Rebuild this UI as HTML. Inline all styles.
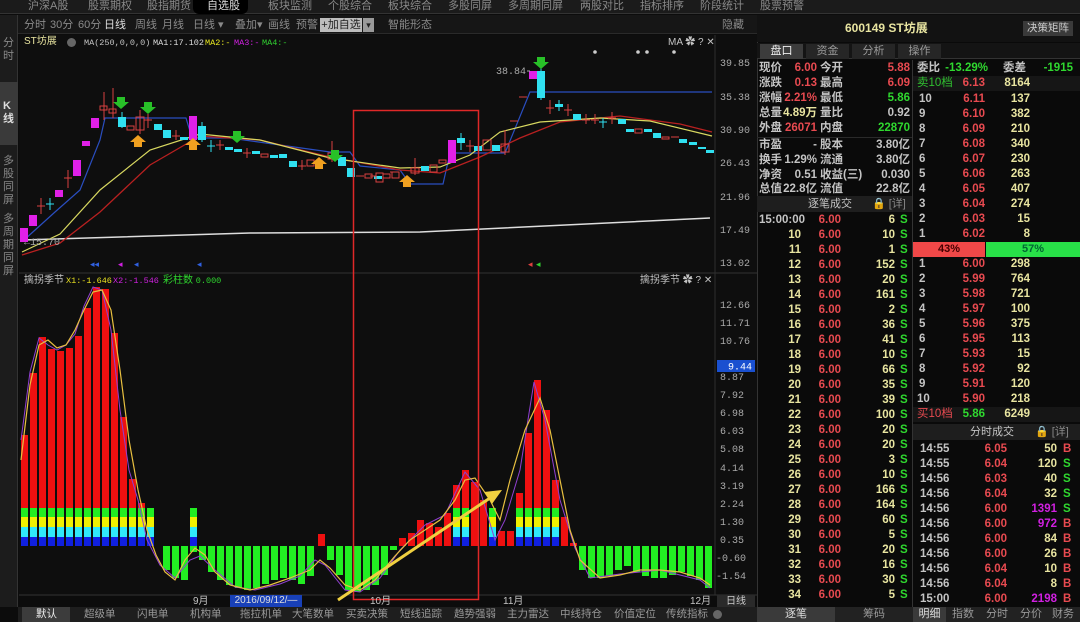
<!DOCTYPE html>
<html><head><meta charset="utf-8">
<style>
*{margin:0;padding:0;box-sizing:border-box}
body{width:1080px;height:622px;background:#0c0c0c;overflow:hidden;position:relative;font-family:"Liberation Sans","Noto Sans CJK SC",sans-serif;font-size:11px;color:#bbb}
.a{position:absolute;white-space:nowrap;line-height:1}
.r{text-align:right}
.rd{color:#e84a50}.gn{color:#2fd82f}.yl{color:#e8e4a0}.gy{color:#c4c4c4}.pu{color:#d020e0}
.row{position:absolute;height:15px;line-height:15px;font-weight:bold;font-size:11.5px;white-space:nowrap}
.m{font-family:"Liberation Mono",monospace;font-size:8.5px}
</style></head><body>
<!-- top nav -->
<div class="a" style="left:0;top:0;width:1080px;height:14px;background:#1b1b1b;border-bottom:1px solid #333"></div>
<div class="a" style="left:193px;top:0;width:55px;height:14px;background:#000;border-radius:0 0 6px 6px"></div>
<div class="a" style="top:1px;left:0;font-size:11px;color:#8a8a8a">
<span class="a" style="left:28px">沪深A股</span><span class="a" style="left:88px">股票期权</span><span class="a" style="left:147px">股指期货</span><span class="a" style="left:207px;color:#ddd">自选股</span><span class="a" style="left:268px">板块监测</span><span class="a" style="left:328px">个股综合</span><span class="a" style="left:388px">板块综合</span><span class="a" style="left:448px">多股同屏</span><span class="a" style="left:508px">多周期同屏</span><span class="a" style="left:580px">两股对比</span><span class="a" style="left:640px">指标排序</span><span class="a" style="left:700px">阶段统计</span><span class="a" style="left:760px">股票预警</span></div>
<!-- toolbar -->
<div class="a" style="left:18px;top:15px;width:739px;height:19px;background:#161616;border-bottom:1px solid #2a2a2a"></div>
<div class="a" style="top:20px;left:0;color:#8a8a8a;font-size:11px">
<span class="a" style="left:24px">分时</span><span class="a" style="left:50px">30分</span><span class="a" style="left:78px">60分</span><span class="a" style="left:104px;color:#ddd">日线</span><span class="a" style="left:135px">周线</span><span class="a" style="left:162px">月线</span><span class="a" style="left:193px">日线 ▾</span><span class="a" style="left:235px">叠加▾</span><span class="a" style="left:268px">画线</span><span class="a" style="left:296px">预警</span><span class="a" style="left:388px">智能形态</span><span class="a" style="left:722px">隐藏</span></div>
<div class="a" style="left:320px;top:18px;width:42px;height:14px;background:#bdbdbd;color:#222;font-size:11px;line-height:14px;text-align:center">+加自选</div>
<div class="a" style="left:363px;top:18px;width:11px;height:14px;background:#9a9a9a;color:#222;font-size:9px;line-height:14px;text-align:center">▾</div>
<!-- sidebar -->
<div class="a" style="left:0;top:15px;width:18px;height:592px;background:#1c1c1c;border-right:1px solid #333"></div>
<div class="a" style="left:0;top:82px;width:18px;height:63px;background:#3a3a3a"></div>
<div class="a" style="left:3px;top:37px;width:12px;font-size:11px;color:#888;line-height:13px;white-space:normal">分时</div>
<div class="a" style="left:3px;top:100px;width:12px;font-size:11px;color:#ddd;line-height:13px;white-space:normal;font-weight:bold">K线</div>
<div class="a" style="left:3px;top:155px;width:12px;font-size:11px;color:#888;line-height:13px;white-space:normal">多股同屏</div>
<div class="a" style="left:3px;top:213px;width:12px;font-size:11px;color:#888;line-height:13px;white-space:normal">多周期同屏</div>
<!-- chart svg -->
<svg class="a" style="left:0;top:0" width="757" height="622" xmlns="http://www.w3.org/2000/svg">
<rect x="19" y="35" width="738" height="560" fill="#0e0e0e"/>
<line x1="19" y1="273" x2="757" y2="273" stroke="#333"/>
<line x1="715" y1="35" x2="715" y2="595" stroke="#2e2e2e"/>
<line x1="19" y1="595" x2="757" y2="595" stroke="#333"/>
<polyline fill="none" stroke="#ddd" stroke-width="1.5" points="22,240 250,233 420,232 710,218"/>
<polyline fill="none" stroke="#2a4ec0" stroke-width="1.2" points="24,240 55,212 80,190 100,140 105,118 186,118 192,138 230,138 330,152 350,152 360,166 400,170 410,184 443,184 450,153 505,153 530,92 540,92 712,92"/>
<polyline fill="none" stroke="#b82020" stroke-width="1.3" points="22,255 60,243 100,212 150,165 200,136 260,140 330,157 400,170 440,173 480,157 520,138 560,122 620,116 680,124 712,132"/>
<polyline fill="none" stroke="#d8d860" stroke-width="1.2" points="22,252 60,234 100,190 150,150 200,134 260,140 330,158 400,168 440,167 470,155 500,132 540,122 600,118 650,121 712,136"/>
<g fill="#e020e8">
<rect x="20" y="228" width="8" height="14"/><rect x="29" y="215" width="8" height="11"/><rect x="55" y="190" width="8" height="7"/><rect x="73" y="160" width="8" height="16"/><rect x="82" y="141" width="8" height="5"/><rect x="91" y="118" width="8" height="10"/><rect x="189" y="116" width="8" height="24"/><rect x="448" y="140" width="8" height="23"/><rect x="529" y="71" width="8" height="8"/></g>
<g fill="#30e0f0">
<rect x="118" y="117" width="8" height="10"/><rect x="154" y="124" width="8" height="6"/><rect x="163" y="130" width="8" height="8"/><rect x="180" y="137" width="8" height="3"/><rect x="198" y="126" width="8" height="14"/><rect x="225" y="147" width="8" height="3"/><rect x="234" y="149" width="8" height="3"/><rect x="252" y="151" width="8" height="3"/><rect x="270" y="155" width="8" height="3"/><rect x="279" y="154" width="8" height="4"/><rect x="289" y="161" width="8" height="6"/><rect x="338" y="157" width="8" height="9"/><rect x="347" y="168" width="8" height="9"/><rect x="374" y="176" width="8" height="3"/><rect x="421" y="166" width="8" height="5"/><rect x="457" y="138" width="8" height="5"/><rect x="474" y="146" width="8" height="5"/><rect x="492" y="145" width="8" height="6"/><rect x="537" y="71" width="8" height="27"/><rect x="555" y="104" width="8" height="3"/><rect x="573" y="114" width="8" height="6"/><rect x="618" y="119" width="8" height="5"/><rect x="626" y="129" width="8" height="3"/><rect x="644" y="129" width="8" height="3"/><rect x="653" y="133" width="8" height="5"/><rect x="679" y="139" width="8" height="4"/><rect x="689" y="142" width="8" height="3"/><rect x="698" y="147" width="8" height="2"/><rect x="706" y="150" width="8" height="3"/></g>
<g stroke="#30e0f0" stroke-width="1"><line x1="50" y1="198" x2="50" y2="210"/><line x1="122" y1="112" x2="122" y2="128"/><line x1="202" y1="122" x2="202" y2="142"/><line x1="211" y1="140" x2="211" y2="152"/><line x1="207" y1="146" x2="215" y2="146"/><line x1="541" y1="66" x2="541" y2="100"/><line x1="461" y1="133" x2="461" y2="150"/><line x1="559" y1="100" x2="559" y2="111"/><line x1="603" y1="118" x2="603" y2="128"/><line x1="599" y1="122" x2="607" y2="122"/><line x1="46" y1="204" x2="54" y2="204"/></g>
<g stroke="#d84040" stroke-width="1" fill="none">
<line x1="41" y1="198" x2="41" y2="214"/><line x1="37" y1="206" x2="45" y2="206"/>
<line x1="68" y1="170" x2="68" y2="188"/><line x1="64" y1="178" x2="72" y2="178"/>
<rect x="100" y="106" width="7" height="4"/><line x1="104" y1="92" x2="104" y2="120"/>
<rect x="109" y="109" width="7" height="4"/><line x1="113" y1="88" x2="113" y2="118"/>
<rect x="127" y="126" width="7" height="4"/><rect x="136" y="117" width="8" height="13"/><line x1="140" y1="110" x2="140" y2="134"/>
<line x1="148" y1="114" x2="148" y2="128"/><line x1="144" y1="120" x2="152" y2="120"/>
<line x1="176" y1="130" x2="176" y2="140"/><line x1="172" y1="136" x2="180" y2="136"/>
<line x1="220" y1="140" x2="220" y2="150"/><line x1="216" y1="145" x2="224" y2="145"/>
<line x1="247" y1="148" x2="247" y2="158"/><line x1="243" y1="153" x2="251" y2="153"/>
<rect x="261" y="154" width="7" height="3"/><line x1="302" y1="160" x2="302" y2="170"/><line x1="298" y1="166" x2="306" y2="166"/>
<rect x="307" y="160" width="7" height="6"/><line x1="316" y1="162" x2="324" y2="162"/>
<rect x="328" y="153" width="8" height="6"/><line x1="332" y1="141" x2="332" y2="162"/>
<line x1="356" y1="176" x2="364" y2="176"/><rect x="365" y="174" width="7" height="4"/><rect x="383" y="174" width="7" height="4"/><rect x="392" y="172" width="7" height="6"/>
<line x1="370" y1="176" x2="376" y2="176"/><rect x="376" y="173" width="7" height="9"/><line x1="390" y1="172" x2="398" y2="172"/>
<rect x="411" y="168" width="8" height="5"/><line x1="415" y1="158" x2="415" y2="175"/>
<rect x="430" y="165" width="7" height="7"/><rect x="439" y="160" width="7" height="3"/>
<line x1="470" y1="140" x2="470" y2="152"/><line x1="466" y1="146" x2="474" y2="146"/>
<rect x="483" y="140" width="8" height="10"/><rect x="501" y="144" width="8" height="8"/><line x1="505" y1="130" x2="505" y2="155"/>
<line x1="510" y1="121" x2="518" y2="121"/><line x1="519" y1="97" x2="527" y2="97"/>
<line x1="550" y1="100" x2="550" y2="114"/><line x1="546" y1="108" x2="554" y2="108"/>
<line x1="568" y1="104" x2="568" y2="116"/><line x1="564" y1="110" x2="572" y2="110"/>
<line x1="586" y1="114" x2="586" y2="124"/><line x1="582" y1="120" x2="590" y2="120"/>
<line x1="595" y1="114" x2="595" y2="124"/><line x1="591" y1="120" x2="599" y2="120"/>
<line x1="612" y1="112" x2="612" y2="124"/><line x1="608" y1="118" x2="616" y2="118"/>
<rect x="635" y="129" width="7" height="4"/><rect x="662" y="137" width="7" height="2"/><line x1="671" y1="137" x2="679" y2="137"/></g>
<g fill="#28c028"><path d="M117 97h8v5h4l-8 7-8-7h4z"/><path d="M144 102h8v5h4l-8 7-8-7h4z"/><path d="M233 131h8v5h4l-8 7-8-7h4z"/><path d="M331 150h8v5h4l-8 7-8-7h4z"/><path d="M537 57h8v5h4l-8 7-8-7h4z"/></g>
<g fill="#f0a020"><path d="M138 135l-8 7h4v5h8v-5h4z"/><path d="M193 138l-8 7h4v5h8v-5h4z"/><path d="M319 157l-8 7h4v5h8v-5h4z"/><path d="M407 175l-8 7h4v5h8v-5h4z"/></g>
<g fill="#ccc"><circle cx="595" cy="52" r="1.8"/><circle cx="638" cy="52" r="1.8"/><circle cx="647" cy="52" r="1.8"/><circle cx="674" cy="52" r="1.8"/></g>
<text x="496" y="74" fill="#aaa" font-size="10" font-family="Liberation Mono">38.84</text><line x1="527" y1="71" x2="530" y2="71" stroke="#aaa"/>
<text x="24" y="245" fill="#aaa" font-size="10" font-family="Liberation Mono">←15.70</text>
<g font-size="9" fill="#3060e0"><text x="90" y="267">◂◂</text><text x="134" y="267">◂</text><text x="197" y="267">◂</text></g>
<text x="118" y="267" font-size="9" fill="#d020e0">◂</text><text x="528" y="267" font-size="9" fill="#e04040">◂</text><text x="536" y="267" font-size="9" fill="#30d030">◂</text>
<g fill="#ee1010">
<rect x="21" y="435" width="7" height="111"/><rect x="30" y="373" width="7" height="173"/><rect x="39" y="337" width="7" height="209"/><rect x="48" y="349" width="7" height="197"/><rect x="57" y="351" width="7" height="195"/><rect x="66" y="348" width="7" height="198"/><rect x="75" y="336" width="7" height="210"/><rect x="84" y="308" width="7" height="238"/><rect x="93" y="287" width="7" height="259"/><rect x="102" y="289" width="7" height="257"/><rect x="111" y="333" width="7" height="213"/><rect x="120" y="417" width="7" height="129"/><rect x="129" y="479" width="7" height="67"/><rect x="138" y="503" width="7" height="43"/>
<rect x="318" y="534" width="7" height="12"/>
<rect x="399" y="538" width="7" height="8"/><rect x="408" y="533" width="7" height="13"/><rect x="417" y="520" width="7" height="26"/><rect x="426" y="523" width="7" height="23"/><rect x="435" y="527" width="7" height="19"/><rect x="444" y="513" width="7" height="33"/><rect x="453" y="485" width="7" height="61"/><rect x="462" y="470" width="7" height="76"/><rect x="471" y="482" width="7" height="64"/><rect x="480" y="500" width="7" height="46"/><rect x="498" y="531" width="7" height="15"/><rect x="507" y="531" width="7" height="15"/><rect x="516" y="493" width="7" height="53"/><rect x="525" y="433" width="7" height="113"/><rect x="534" y="380" width="7" height="166"/><rect x="543" y="410" width="7" height="136"/><rect x="552" y="480" width="7" height="66"/><rect x="561" y="517" width="7" height="29"/><rect x="570" y="543" width="7" height="3"/></g>
<defs><g id="st"><rect width="7" height="9" fill="#22ee22"/><rect y="9" width="7" height="10" fill="#f0f000"/><rect y="19" width="7" height="10" fill="#30e8f8"/><rect y="29" width="7" height="9" fill="#1020e0"/></g></defs>
<g transform="translate(0,508)"><use href="#st" x="21"/><use href="#st" x="30"/><use href="#st" x="39"/><use href="#st" x="48"/><use href="#st" x="57"/><use href="#st" x="66"/><use href="#st" x="75"/><use href="#st" x="84"/><use href="#st" x="93"/><use href="#st" x="102"/><use href="#st" x="111"/><use href="#st" x="120"/><use href="#st" x="129"/><use href="#st" x="138"/><use href="#st" x="147"/><use href="#st" x="190"/><use href="#st" x="453"/><use href="#st" x="462"/><use href="#st" x="489"/><use href="#st" x="516"/><use href="#st" x="525"/><use href="#st" x="534"/><use href="#st" x="543"/><use href="#st" x="552"/></g>
<g fill="#22ee22">
<rect x="163" y="546" width="7" height="24"/><rect x="172" y="546" width="7" height="32"/><rect x="181" y="546" width="7" height="34"/><rect x="190" y="546" width="7" height="6"/><rect x="199" y="546" width="7" height="14"/><rect x="208" y="546" width="7" height="26"/><rect x="217" y="546" width="7" height="34"/><rect x="226" y="546" width="7" height="39"/><rect x="235" y="546" width="7" height="42"/><rect x="244" y="546" width="7" height="44"/><rect x="253" y="546" width="7" height="42"/><rect x="262" y="546" width="7" height="38"/><rect x="271" y="546" width="7" height="34"/><rect x="280" y="546" width="7" height="32"/><rect x="289" y="546" width="7" height="34"/><rect x="298" y="546" width="7" height="38"/><rect x="307" y="546" width="7" height="30"/><rect x="327" y="546" width="7" height="14"/><rect x="336" y="546" width="7" height="29"/><rect x="345" y="546" width="7" height="44"/><rect x="354" y="546" width="7" height="46"/><rect x="363" y="546" width="7" height="44"/><rect x="372" y="546" width="7" height="39"/><rect x="381" y="546" width="7" height="29"/><rect x="390" y="546" width="7" height="4"/>
<rect x="579" y="546" width="7" height="24"/><rect x="588" y="546" width="7" height="32"/><rect x="597" y="546" width="7" height="32"/><rect x="606" y="546" width="7" height="30"/><rect x="615" y="546" width="7" height="24"/><rect x="624" y="546" width="7" height="20"/><rect x="633" y="546" width="7" height="26"/><rect x="642" y="546" width="7" height="30"/><rect x="651" y="546" width="7" height="32"/><rect x="660" y="546" width="7" height="32"/><rect x="669" y="546" width="7" height="29"/><rect x="678" y="546" width="7" height="26"/><rect x="687" y="546" width="7" height="30"/><rect x="696" y="546" width="7" height="34"/><rect x="705" y="546" width="7" height="42"/></g>
<polyline fill="none" stroke="#9040d0" stroke-width="1" points="21,440 30,372 39,338 48,345 57,350 66,345 75,334 84,306 93,287 102,290 111,330 120,410 129,470 138,500 147,540 160,565 175,578 190,560 200,556 215,570 235,587 255,590 280,584 300,576 315,560 325,565 345,590 360,592 380,578 400,550 425,525 445,515 465,472 480,490 495,540 505,520 520,470 534,382 545,420 560,500 575,548 590,578 620,574 660,570 700,580 710,588"/>
<polyline fill="none" stroke="#e8c040" stroke-width="1.2" points="21,460 30,385 39,345 48,340 57,348 66,345 75,330 84,310 93,292 102,290 111,310 120,370 129,440 138,490 147,530 156,555 165,572 175,580 185,560 195,548 205,555 215,572 230,585 250,590 270,585 290,578 310,570 320,560 330,568 345,585 360,590 375,580 395,556 410,540 425,530 440,520 455,500 465,480 475,478 490,500 500,520 510,480 525,430 540,398 550,430 560,480 570,530 580,560 600,578 620,575 640,570 660,570 680,572 700,578 710,585"/>
<rect x="353.5" y="110.5" width="125" height="489" fill="none" stroke="#e02828" stroke-width="1.5"/>
<line x1="338" y1="600" x2="490" y2="498" stroke="#f0d040" stroke-width="3"/>
<path d="M502 490l-18 2 8 12z" fill="#f0d040"/>
<g fill="#aaa" font-size="10" font-family="Liberation Mono">
<text x="720" y="66">39.85</text><text x="720" y="100">35.38</text><text x="720" y="133">30.90</text><text x="720" y="166">26.43</text><text x="720" y="200">21.96</text><text x="720" y="233">17.49</text><text x="720" y="266">13.02</text>
<text x="720" y="308">12.66</text><text x="720" y="326">11.71</text><text x="720" y="344">10.76</text><text x="720" y="380">8.87</text><text x="720" y="398">7.92</text><text x="720" y="416">6.98</text><text x="720" y="434">6.03</text><text x="720" y="452">5.08</text><text x="720" y="471">4.14</text><text x="720" y="489">3.19</text><text x="720" y="507">2.24</text><text x="720" y="525">1.30</text><text x="720" y="543">0.35</text><text x="716" y="561">-0.60</text><text x="716" y="579">-1.54</text></g>
<rect x="717" y="360" width="38" height="12" fill="#1a50d0"/><text x="728" y="369.5" fill="#fff" font-size="10" font-family="Liberation Mono">9.44</text>
</svg>
<!-- chart titles -->
<div class="a yl" style="top:37px;left:24px;font-size:10px">ST坊展</div>
<div class="a" style="left:67px;top:38px;width:9px;height:9px;border-radius:50%;background:#666"></div>
<div class="a gy m" style="left:84px;top:39px">MA(250,0,0,0)</div>
<div class="a m" style="left:153px;top:39px;color:#ddd">MA1:17.102</div>
<div class="a m" style="left:205px;top:39px;color:#e8e820">MA2:-</div>
<div class="a m" style="left:234px;top:39px;color:#d020e0">MA3:-</div>
<div class="a m" style="left:262px;top:39px;color:#30d030">MA4:-</div>
<div class="a gy" style="top:38px;left:668px;font-size:10px">MA ✿ ? ✕</div>
<div class="a gy" style="top:276px;left:24px;font-size:10px">擒拐季节</div>
<div class="a m" style="top:277px;left:66px;color:#e8e020">X1:-1.646</div>
<div class="a m pu" style="top:277px;left:113px">X2:-1.546</div>
<div class="a gn" style="top:276px;left:163px;font-size:10px">彩柱数 <span class="m">0.000</span></div>
<div class="a gy" style="top:276px;left:640px;font-size:10px">擒拐季节 ✿ ? ✕</div>
<!-- time axis -->
<div class="a gy" style="top:597px;left:193px;font-size:10px">9月</div>
<div class="a" style="top:595px;left:230px;width:72px;height:12px;background:#1840b8;color:#ddd;font-size:10px;line-height:12px;text-align:center">2016/09/12/—</div>
<div class="a gy" style="top:597px;left:370px;font-size:10px">10月</div>
<div class="a gy" style="top:597px;left:503px;font-size:10px">11月</div>
<div class="a gy" style="top:597px;left:690px;font-size:10px">12月</div>
<div class="a" style="top:595px;left:717px;width:38px;height:13px;background:#2a2a2a;color:#ccc;font-size:10px;line-height:13px;text-align:center">日线</div>
<!-- bottom tabs -->
<div class="a" style="left:18px;top:607px;width:739px;height:15px;background:#1e1e1e"></div>
<div class="a" style="left:22px;top:607px;width:48px;height:15px;background:#3c3c3c"></div>
<div class="a" style="top:609px;left:0;font-size:10.5px;color:#999">
<span class="a" style="left:36px;color:#eee">默认</span><span class="a" style="left:84px">超级单</span><span class="a" style="left:137px">闪电单</span><span class="a" style="left:190px">机构单</span><span class="a" style="left:240px">拖拉机单</span><span class="a" style="left:292px">大笔数单</span><span class="a" style="left:346px">买卖决策</span><span class="a" style="left:400px">短线追踪</span><span class="a" style="left:454px">趋势强弱</span><span class="a" style="left:507px">主力雷达</span><span class="a" style="left:560px">中线持仓</span><span class="a" style="left:614px">价值定位</span><span class="a" style="left:666px">传统指标</span><span class="a" style="left:713px;top:1px;width:9px;height:9px;border-radius:50%;background:#666"></span></div>

<!-- right panel -->
<div class="a" style="left:757px;top:15px;width:323px;height:607px;background:#0a0a0a;border-left:1px solid #333"></div>
<div class="a" style="left:757px;top:15px;width:323px;height:27px;background:#121212"></div>
<div class="a yl" style="left:845px;top:22px;font-size:12px;font-weight:bold">600149 ST坊展</div>
<div class="a" style="left:1023px;top:21px;width:50px;height:15px;background:#3a3a3a;color:#ccc;font-size:10.5px;line-height:15px;text-align:center">决策矩阵</div>
<div class="a" style="left:757px;top:43px;width:323px;height:16px;background:#141414;border-bottom:1px solid #333"></div>
<div class="a" style="left:760px;top:44px;width:43px;height:15px;background:#3c3c3c;color:#eee;text-align:center;line-height:15px">盘口</div>
<div class="a" style="left:806px;top:44px;width:43px;height:15px;background:#262626;color:#999;text-align:center;line-height:15px">资金</div>
<div class="a" style="left:852px;top:44px;width:43px;height:15px;background:#262626;color:#999;text-align:center;line-height:15px">分析</div>
<div class="a" style="left:898px;top:44px;width:43px;height:15px;background:#262626;color:#999;text-align:center;line-height:15px">操作</div>
<div class="a" style="left:912px;top:60px;width:1px;height:547px;background:#333"></div>
<div class="a" style="left:757px;top:196px;width:155px;height:16px;background:#1e1e1e"></div>
<div class="a" style="left:757px;top:137px;width:155px;height:1px;background:#2a2a2a"></div>
<div class="row gy" style="left:759px;top:61px">现价</div><div class="row rd r" style="left:790px;top:61px;width:27px">6.00</div><div class="row gy" style="left:820px;top:61px">今开</div><div class="row rd r" style="left:870px;top:61px;width:40px">5.88</div>
<div class="row gy" style="left:759px;top:76px">涨跌</div><div class="row rd r" style="left:790px;top:76px;width:27px">0.13</div><div class="row gy" style="left:820px;top:76px">最高</div><div class="row rd r" style="left:870px;top:76px;width:40px">6.09</div>
<div class="row gy" style="left:759px;top:91px">涨幅</div><div class="row rd r" style="left:780px;top:91px;width:37px">2.21%</div><div class="row gy" style="left:820px;top:91px">最低</div><div class="row gn r" style="left:870px;top:91px;width:40px">5.86</div>
<div class="row gy" style="left:759px;top:106px">总量</div><div class="row yl r" style="left:780px;top:106px;width:37px">4.89万</div><div class="row gy" style="left:820px;top:106px">量比</div><div class="row gy r" style="left:870px;top:106px;width:40px">0.92</div>
<div class="row gy" style="left:759px;top:121px">外盘</div><div class="row rd r" style="left:780px;top:121px;width:37px">26071</div><div class="row gy" style="left:820px;top:121px">内盘</div><div class="row gn r" style="left:860px;top:121px;width:50px">22870</div>
<div class="row gy" style="left:759px;top:138px">市盈</div><div class="row gy r" style="left:780px;top:138px;width:37px">-</div><div class="row gy" style="left:820px;top:138px">股本</div><div class="row gy r" style="left:860px;top:138px;width:50px">3.80亿</div>
<div class="row gy" style="left:759px;top:153px">换手</div><div class="row gy r" style="left:780px;top:153px;width:37px">1.29%</div><div class="row gy" style="left:820px;top:153px">流通</div><div class="row gy r" style="left:860px;top:153px;width:50px">3.80亿</div>
<div class="row gy" style="left:759px;top:168px">净资</div><div class="row gy r" style="left:780px;top:168px;width:37px">0.51</div><div class="row gy" style="left:820px;top:168px">收益(三)</div><div class="row gy r" style="left:870px;top:168px;width:40px">0.030</div>
<div class="row gy" style="left:759px;top:182px">总值</div><div class="row gy r" style="left:780px;top:182px;width:37px">22.8亿</div><div class="row gy" style="left:820px;top:182px">流值</div><div class="row gy r" style="left:860px;top:182px;width:50px">22.8亿</div>
<div class="a gy" style="left:808px;top:199px">逐笔成交</div><div class="a" style="left:872px;top:199px;color:#888">🔒 [详]</div>
<div class="row gy" style="left:917px;top:61px">委比</div><div class="row gn r" style="left:940px;top:61px;width:48px">-13.29%</div><div class="row gy" style="left:1003px;top:61px">委差</div><div class="row gn r" style="left:1030px;top:61px;width:43px">-1915</div>
<div class="a" style="left:913px;top:76px;width:167px;height:15px;background:#161616"></div>
<div class="row" style="left:917px;top:76px;color:#30c030;font-weight:normal">卖10档</div><div class="row rd r" style="left:950px;top:76px;width:35px">6.13</div><div class="row yl r" style="left:990px;top:76px;width:40px">8164</div>
<div class="a" style="left:913px;top:242px;width:72px;height:15px;background:#f04848;color:#400;text-align:center;line-height:15px;font-weight:bold">43%</div>
<div class="a" style="left:986px;top:242px;width:94px;height:15px;background:#28e048;color:#063;text-align:center;line-height:15px;font-weight:bold">57%</div>
<div class="a" style="left:913px;top:407px;width:167px;height:15px;background:#161616"></div>
<div class="row" style="left:917px;top:407px;color:#e84a50;font-weight:normal">买10档</div><div class="row gn r" style="left:950px;top:407px;width:35px">5.86</div><div class="row yl r" style="left:990px;top:407px;width:40px">6249</div>
<div class="a" style="left:913px;top:424px;width:167px;height:16px;background:#1e1e1e"></div>
<div class="a gy" style="left:970px;top:427px">分时成交</div><div class="a" style="left:1035px;top:427px;color:#888">🔒 [详]</div>
<div class="a" style="left:757px;top:607px;width:323px;height:15px;background:#222"></div>
<div class="a" style="left:757px;top:607px;width:78px;height:15px;background:#3a3a3a;color:#ddd;text-align:center;line-height:15px">逐笔</div>
<div class="a" style="left:836px;top:607px;width:76px;height:15px;color:#999;text-align:center;line-height:15px">筹码</div>
<div class="a" style="left:913px;top:607px;width:33px;height:15px;background:#3a3a3a;color:#ddd;text-align:center;line-height:15px">明细</div>
<div class="a" style="left:952px;top:609px;color:#999">指数</div><div class="a" style="left:986px;top:609px;color:#999">分时</div><div class="a" style="left:1020px;top:609px;color:#999">分价</div><div class="a" style="left:1052px;top:609px;color:#999">财务</div>
<div class="row gy" style="left:919px;top:92px">10</div><div class="row rd r" style="left:950px;top:92px;width:35px">6.11</div><div class="row yl r" style="left:990px;top:92px;width:40px">137</div>
<div class="row gy" style="left:919px;top:107px">9</div><div class="row rd r" style="left:950px;top:107px;width:35px">6.10</div><div class="row yl r" style="left:990px;top:107px;width:40px">382</div>
<div class="row gy" style="left:919px;top:122px">8</div><div class="row rd r" style="left:950px;top:122px;width:35px">6.09</div><div class="row yl r" style="left:990px;top:122px;width:40px">210</div>
<div class="row gy" style="left:919px;top:137px">7</div><div class="row rd r" style="left:950px;top:137px;width:35px">6.08</div><div class="row yl r" style="left:990px;top:137px;width:40px">340</div>
<div class="row gy" style="left:919px;top:152px">6</div><div class="row rd r" style="left:950px;top:152px;width:35px">6.07</div><div class="row yl r" style="left:990px;top:152px;width:40px">230</div>
<div class="row gy" style="left:919px;top:167px">5</div><div class="row rd r" style="left:950px;top:167px;width:35px">6.06</div><div class="row yl r" style="left:990px;top:167px;width:40px">263</div>
<div class="row gy" style="left:919px;top:182px">4</div><div class="row rd r" style="left:950px;top:182px;width:35px">6.05</div><div class="row yl r" style="left:990px;top:182px;width:40px">407</div>
<div class="row gy" style="left:919px;top:197px">3</div><div class="row rd r" style="left:950px;top:197px;width:35px">6.04</div><div class="row yl r" style="left:990px;top:197px;width:40px">274</div>
<div class="row gy" style="left:919px;top:212px">2</div><div class="row rd r" style="left:950px;top:212px;width:35px">6.03</div><div class="row yl r" style="left:990px;top:212px;width:40px">15</div>
<div class="row gy" style="left:919px;top:227px">1</div><div class="row rd r" style="left:950px;top:227px;width:35px">6.02</div><div class="row yl r" style="left:990px;top:227px;width:40px">8</div>
<div class="row gy" style="left:919px;top:257px">1</div><div class="row rd r" style="left:950px;top:257px;width:35px">6.00</div><div class="row yl r" style="left:990px;top:257px;width:40px">298</div>
<div class="row gy" style="left:919px;top:272px">2</div><div class="row rd r" style="left:950px;top:272px;width:35px">5.99</div><div class="row yl r" style="left:990px;top:272px;width:40px">764</div>
<div class="row gy" style="left:919px;top:287px">3</div><div class="row rd r" style="left:950px;top:287px;width:35px">5.98</div><div class="row yl r" style="left:990px;top:287px;width:40px">721</div>
<div class="row gy" style="left:919px;top:302px">4</div><div class="row rd r" style="left:950px;top:302px;width:35px">5.97</div><div class="row yl r" style="left:990px;top:302px;width:40px">100</div>
<div class="row gy" style="left:919px;top:317px">5</div><div class="row rd r" style="left:950px;top:317px;width:35px">5.96</div><div class="row yl r" style="left:990px;top:317px;width:40px">375</div>
<div class="row gy" style="left:919px;top:332px">6</div><div class="row rd r" style="left:950px;top:332px;width:35px">5.95</div><div class="row yl r" style="left:990px;top:332px;width:40px">113</div>
<div class="row gy" style="left:919px;top:347px">7</div><div class="row rd r" style="left:950px;top:347px;width:35px">5.93</div><div class="row yl r" style="left:990px;top:347px;width:40px">15</div>
<div class="row gy" style="left:919px;top:362px">8</div><div class="row rd r" style="left:950px;top:362px;width:35px">5.92</div><div class="row yl r" style="left:990px;top:362px;width:40px">92</div>
<div class="row gy" style="left:919px;top:377px">9</div><div class="row rd r" style="left:950px;top:377px;width:35px">5.91</div><div class="row yl r" style="left:990px;top:377px;width:40px">120</div>
<div class="row gy" style="left:917px;top:392px">10</div><div class="row rd r" style="left:950px;top:392px;width:35px">5.90</div><div class="row yl r" style="left:990px;top:392px;width:40px">218</div>
<div class="row gy" style="left:920px;top:442px">14:55</div><div class="row rd r" style="left:970px;top:442px;width:37px">6.05</div><div class="row yl r" style="left:1020px;top:442px;width:37px">50</div><div class="row rd" style="left:1063px;top:442px">B</div>
<div class="row gy" style="left:920px;top:457px">14:55</div><div class="row rd r" style="left:970px;top:457px;width:37px">6.04</div><div class="row yl r" style="left:1020px;top:457px;width:37px">120</div><div class="row gn" style="left:1063px;top:457px">S</div>
<div class="row gy" style="left:920px;top:472px">14:56</div><div class="row rd r" style="left:970px;top:472px;width:37px">6.03</div><div class="row yl r" style="left:1020px;top:472px;width:37px">40</div><div class="row gn" style="left:1063px;top:472px">S</div>
<div class="row gy" style="left:920px;top:487px">14:56</div><div class="row rd r" style="left:970px;top:487px;width:37px">6.04</div><div class="row yl r" style="left:1020px;top:487px;width:37px">32</div><div class="row gn" style="left:1063px;top:487px">S</div>
<div class="row gy" style="left:920px;top:502px">14:56</div><div class="row rd r" style="left:970px;top:502px;width:37px">6.00</div><div class="row pu r" style="left:1020px;top:502px;width:37px">1391</div><div class="row gn" style="left:1063px;top:502px">S</div>
<div class="row gy" style="left:920px;top:517px">14:56</div><div class="row rd r" style="left:970px;top:517px;width:37px">6.00</div><div class="row pu r" style="left:1020px;top:517px;width:37px">972</div><div class="row rd" style="left:1063px;top:517px">B</div>
<div class="row gy" style="left:920px;top:532px">14:56</div><div class="row rd r" style="left:970px;top:532px;width:37px">6.00</div><div class="row yl r" style="left:1020px;top:532px;width:37px">84</div><div class="row rd" style="left:1063px;top:532px">B</div>
<div class="row gy" style="left:920px;top:547px">14:56</div><div class="row rd r" style="left:970px;top:547px;width:37px">6.00</div><div class="row yl r" style="left:1020px;top:547px;width:37px">26</div><div class="row rd" style="left:1063px;top:547px">B</div>
<div class="row gy" style="left:920px;top:562px">14:56</div><div class="row rd r" style="left:970px;top:562px;width:37px">6.04</div><div class="row yl r" style="left:1020px;top:562px;width:37px">10</div><div class="row rd" style="left:1063px;top:562px">B</div>
<div class="row gy" style="left:920px;top:577px">14:56</div><div class="row rd r" style="left:970px;top:577px;width:37px">6.04</div><div class="row yl r" style="left:1020px;top:577px;width:37px">8</div><div class="row rd" style="left:1063px;top:577px">B</div>
<div class="row gy" style="left:920px;top:592px">15:00</div><div class="row rd r" style="left:970px;top:592px;width:37px">6.00</div><div class="row pu r" style="left:1020px;top:592px;width:37px">2198</div><div class="row rd" style="left:1063px;top:592px">B</div>
<div class="row gy" style="left:759px;top:213px">15:00:00</div><div class="row rd r" style="left:810px;top:213px;width:31px">6.00</div><div class="row yl r" style="left:850px;top:213px;width:45px">6</div><div class="row gn" style="left:900px;top:213px">S</div>
<div class="row yl r" style="left:780px;top:228px;width:21px">10</div><div class="row rd r" style="left:810px;top:228px;width:31px">6.00</div><div class="row yl r" style="left:850px;top:228px;width:45px">10</div><div class="row gn" style="left:900px;top:228px">S</div>
<div class="row yl r" style="left:780px;top:243px;width:21px">11</div><div class="row rd r" style="left:810px;top:243px;width:31px">6.00</div><div class="row yl r" style="left:850px;top:243px;width:45px">1</div><div class="row gn" style="left:900px;top:243px">S</div>
<div class="row yl r" style="left:780px;top:258px;width:21px">12</div><div class="row rd r" style="left:810px;top:258px;width:31px">6.00</div><div class="row yl r" style="left:850px;top:258px;width:45px">152</div><div class="row gn" style="left:900px;top:258px">S</div>
<div class="row yl r" style="left:780px;top:273px;width:21px">13</div><div class="row rd r" style="left:810px;top:273px;width:31px">6.00</div><div class="row yl r" style="left:850px;top:273px;width:45px">20</div><div class="row gn" style="left:900px;top:273px">S</div>
<div class="row yl r" style="left:780px;top:288px;width:21px">14</div><div class="row rd r" style="left:810px;top:288px;width:31px">6.00</div><div class="row yl r" style="left:850px;top:288px;width:45px">161</div><div class="row gn" style="left:900px;top:288px">S</div>
<div class="row yl r" style="left:780px;top:303px;width:21px">15</div><div class="row rd r" style="left:810px;top:303px;width:31px">6.00</div><div class="row yl r" style="left:850px;top:303px;width:45px">2</div><div class="row gn" style="left:900px;top:303px">S</div>
<div class="row yl r" style="left:780px;top:318px;width:21px">16</div><div class="row rd r" style="left:810px;top:318px;width:31px">6.00</div><div class="row yl r" style="left:850px;top:318px;width:45px">36</div><div class="row gn" style="left:900px;top:318px">S</div>
<div class="row yl r" style="left:780px;top:333px;width:21px">17</div><div class="row rd r" style="left:810px;top:333px;width:31px">6.00</div><div class="row yl r" style="left:850px;top:333px;width:45px">41</div><div class="row gn" style="left:900px;top:333px">S</div>
<div class="row yl r" style="left:780px;top:348px;width:21px">18</div><div class="row rd r" style="left:810px;top:348px;width:31px">6.00</div><div class="row yl r" style="left:850px;top:348px;width:45px">10</div><div class="row gn" style="left:900px;top:348px">S</div>
<div class="row yl r" style="left:780px;top:363px;width:21px">19</div><div class="row rd r" style="left:810px;top:363px;width:31px">6.00</div><div class="row yl r" style="left:850px;top:363px;width:45px">66</div><div class="row gn" style="left:900px;top:363px">S</div>
<div class="row yl r" style="left:780px;top:378px;width:21px">20</div><div class="row rd r" style="left:810px;top:378px;width:31px">6.00</div><div class="row yl r" style="left:850px;top:378px;width:45px">35</div><div class="row gn" style="left:900px;top:378px">S</div>
<div class="row yl r" style="left:780px;top:393px;width:21px">21</div><div class="row rd r" style="left:810px;top:393px;width:31px">6.00</div><div class="row yl r" style="left:850px;top:393px;width:45px">39</div><div class="row gn" style="left:900px;top:393px">S</div>
<div class="row yl r" style="left:780px;top:408px;width:21px">22</div><div class="row rd r" style="left:810px;top:408px;width:31px">6.00</div><div class="row yl r" style="left:850px;top:408px;width:45px">100</div><div class="row gn" style="left:900px;top:408px">S</div>
<div class="row yl r" style="left:780px;top:423px;width:21px">23</div><div class="row rd r" style="left:810px;top:423px;width:31px">6.00</div><div class="row yl r" style="left:850px;top:423px;width:45px">20</div><div class="row gn" style="left:900px;top:423px">S</div>
<div class="row yl r" style="left:780px;top:438px;width:21px">24</div><div class="row rd r" style="left:810px;top:438px;width:31px">6.00</div><div class="row yl r" style="left:850px;top:438px;width:45px">20</div><div class="row gn" style="left:900px;top:438px">S</div>
<div class="row yl r" style="left:780px;top:453px;width:21px">25</div><div class="row rd r" style="left:810px;top:453px;width:31px">6.00</div><div class="row yl r" style="left:850px;top:453px;width:45px">3</div><div class="row gn" style="left:900px;top:453px">S</div>
<div class="row yl r" style="left:780px;top:468px;width:21px">26</div><div class="row rd r" style="left:810px;top:468px;width:31px">6.00</div><div class="row yl r" style="left:850px;top:468px;width:45px">10</div><div class="row gn" style="left:900px;top:468px">S</div>
<div class="row yl r" style="left:780px;top:483px;width:21px">27</div><div class="row rd r" style="left:810px;top:483px;width:31px">6.00</div><div class="row yl r" style="left:850px;top:483px;width:45px">166</div><div class="row gn" style="left:900px;top:483px">S</div>
<div class="row yl r" style="left:780px;top:498px;width:21px">28</div><div class="row rd r" style="left:810px;top:498px;width:31px">6.00</div><div class="row yl r" style="left:850px;top:498px;width:45px">164</div><div class="row gn" style="left:900px;top:498px">S</div>
<div class="row yl r" style="left:780px;top:513px;width:21px">29</div><div class="row rd r" style="left:810px;top:513px;width:31px">6.00</div><div class="row yl r" style="left:850px;top:513px;width:45px">60</div><div class="row gn" style="left:900px;top:513px">S</div>
<div class="row yl r" style="left:780px;top:528px;width:21px">30</div><div class="row rd r" style="left:810px;top:528px;width:31px">6.00</div><div class="row yl r" style="left:850px;top:528px;width:45px">5</div><div class="row gn" style="left:900px;top:528px">S</div>
<div class="row yl r" style="left:780px;top:543px;width:21px">31</div><div class="row rd r" style="left:810px;top:543px;width:31px">6.00</div><div class="row yl r" style="left:850px;top:543px;width:45px">20</div><div class="row gn" style="left:900px;top:543px">S</div>
<div class="row yl r" style="left:780px;top:558px;width:21px">32</div><div class="row rd r" style="left:810px;top:558px;width:31px">6.00</div><div class="row yl r" style="left:850px;top:558px;width:45px">16</div><div class="row gn" style="left:900px;top:558px">S</div>
<div class="row yl r" style="left:780px;top:573px;width:21px">33</div><div class="row rd r" style="left:810px;top:573px;width:31px">6.00</div><div class="row yl r" style="left:850px;top:573px;width:45px">30</div><div class="row gn" style="left:900px;top:573px">S</div>
<div class="row yl r" style="left:780px;top:588px;width:21px">34</div><div class="row rd r" style="left:810px;top:588px;width:31px">6.00</div><div class="row yl r" style="left:850px;top:588px;width:45px">5</div><div class="row gn" style="left:900px;top:588px">S</div>
</body></html>
